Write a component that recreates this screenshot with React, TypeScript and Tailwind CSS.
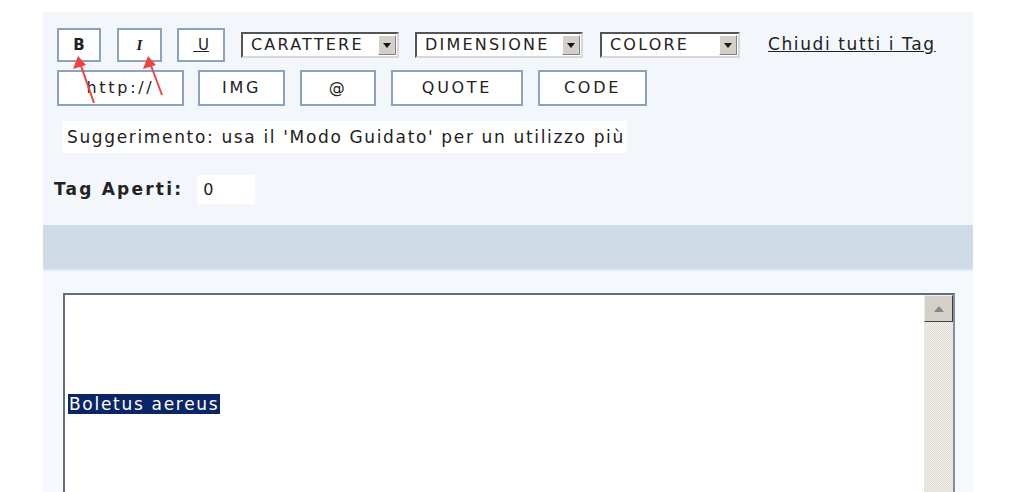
const btn =
  "flex items-center justify-center bg-white border-2 border-[#8da2bb] text-[#222] shrink-0";

function Select({ label, width }: { label: string; width: string }) {
  return (
    <div
      className={`${width} h-[26px] flex items-stretch bg-white border-2 border-t-[#555] border-l-[#555] border-r-[#d8d8d8] border-b-[#d8d8d8] shrink-0`}
    >
      <span className="flex-1 pl-[8px] text-[16px] tracking-[2.2px] leading-[22px] text-[#222] whitespace-nowrap overflow-hidden">
        {label}
      </span>
      <span className="w-[18px] m-[1px] flex items-center justify-center bg-[#d4d0c8] border border-t-white border-l-white border-r-[#808080] border-b-[#808080]">
        <svg width="8" height="5" viewBox="0 0 8 5">
          <path d="M0 0h8L4 5z" fill="#111" />
        </svg>
      </span>
    </div>
  );
}

export default function App() {
  return (
    <div className="relative w-[1010px] h-[492px] overflow-hidden bg-white font-['DejaVu_Sans',sans-serif]">
      <div className="ml-[43px] pt-[12px] w-[930px]">
        {/* toolbar area */}
        <div className="h-[213px] bg-[#f3f6fb] pl-[14px] pt-[16px]">
          <div className="flex items-center h-[34px]">
            <div className={`${btn} w-[44px] h-[34px] text-[15px] font-bold`}>B</div>
            <div className={`${btn} ml-[16px] w-[45px] h-[34px] text-[15px] italic font-['Liberation_Serif',serif] font-bold`}>
              I
            </div>
            <div className={`${btn} ml-[15px] w-[48px] h-[34px] text-[15px] underline`}>&nbsp;U</div>
            <div className="ml-[16px]">
              <Select label="CARATTERE" width="w-[158px]" />
            </div>
            <div className="ml-[16px]">
              <Select label="DIMENSIONE" width="w-[168px]" />
            </div>
            <div className="ml-[17px]">
              <Select label="COLORE" width="w-[140px]" />
            </div>
            <a className="ml-[28px] text-[17px] text-[#222] underline tracking-[1.6px]">Chiudi tutti i Tag</a>
          </div>
          <div className="flex items-center mt-[8px] text-[16px] tracking-[2.7px]">
            <div className={`${btn} w-[127px] h-[36px]`}>http://</div>
            <div className={`${btn} ml-[14px] w-[87px] h-[36px]`}>IMG</div>
            <div className={`${btn} ml-[15px] w-[76px] h-[36px]`}>@</div>
            <div className={`${btn} ml-[15px] w-[132px] h-[36px]`}>QUOTE</div>
            <div className={`${btn} ml-[15px] w-[109px] h-[36px]`}>CODE</div>
          </div>
          <div className="mt-[15px] ml-[5px] w-[565px] h-[32px] bg-white pl-[5px] text-[17px] leading-[32px] tracking-[1.65px] text-[#222] whitespace-nowrap">
            Suggerimento: usa il 'Modo Guidato' per un utilizzo più
          </div>
          <div className="flex items-center mt-[22px] -ml-[3px]">
            <span className="text-[17px] font-bold text-[#222] tracking-[2.2px]">Tag Aperti:</span>
            <span className="ml-[14px] w-[58px] h-[29px] bg-white pl-[6px] text-[16px] leading-[29px] text-[#222]">0</span>
          </div>
        </div>
        {/* band */}
        <div className="h-[46px] bg-[#cfdbe7] border-b-2 border-[#e2e9f1]" />
        {/* editor area */}
        <div className="h-[230px] bg-[#f5f8fc] pl-[20px] pt-[22px]">
          <div className="flex w-[892px] h-[220px] bg-white border-2 border-t-[#5d6d82] border-l-[#5d6d82] border-r-[#7d90a8] border-b-[#7d90a8]">
            <div className="flex-1 pt-[97px] pl-[3px]">
              <span className="bg-[#0b2567] text-white text-[17px] leading-[24px] px-[1px] tracking-[1.7px]">
                Boletus aereus
              </span>
            </div>
            <div className="w-[29px] flex flex-col bg-[repeating-conic-gradient(#ddd9d0_0_25%,#f4f2ee_0_50%)] bg-[length:2px_2px]">
              <div className="h-[27px] flex items-center justify-center bg-[#d4d0c8] border border-t-[#eee] border-l-[#eee] border-r-[#404040] border-b-[#404040]">
                <svg width="10" height="6" viewBox="0 0 10 6">
                  <path d="M5 0L10 6H0z" fill="#888" />
                </svg>
              </div>
            </div>
          </div>
        </div>
      </div>
      {/* red annotation arrows */}
      <svg className="absolute left-0 top-0 pointer-events-none" width="1010" height="492">
        <g stroke="#ec4444" strokeWidth="2" fill="#ec4444">
          <line x1="94" y1="103" x2="80" y2="63" />
          <path d="M78 56 L73 69 L86 65 Z" stroke="none" />
          <line x1="162" y1="95" x2="150" y2="63" />
          <path d="M148 56 L143 69 L156 65 Z" stroke="none" />
        </g>
      </svg>
    </div>
  );
}
